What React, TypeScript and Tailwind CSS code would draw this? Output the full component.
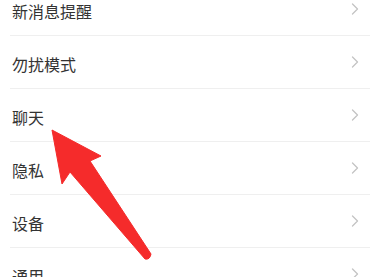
import React from 'react';

const items = ['新消息提醒', '勿扰模式', '聊天', '隐私', '设备', '通用'];

function Chevron() {
    return (
        <svg width="8" height="12" viewBox="0 0 8 12" fill="none" className="shrink-0">
            <path d="M1.5 1 L6.5 6 L1.5 11" stroke="#c4c4c4" strokeWidth="1.3" strokeLinecap="round" strokeLinejoin="round" />
        </svg>
    );
}

export default function App() {
    return (
        <div
            className="relative w-[370px] h-[277px] overflow-hidden bg-white"
            style={{ fontFamily: '"Noto Sans CJK SC", "Noto Sans", sans-serif' }}
        >
            {/* List */}
            <div className="-mt-[17px] flex flex-col">
                {items.map((label) => (
                    <div key={label} className="ml-[10px] h-[53px] flex items-center justify-between border-b border-[#efefef] pr-[11px]">
                        <span className="pl-[2px] pt-[4px] text-[16px] leading-none text-[#333333]">{label}</span>
                        <Chevron />
                    </div>
                ))}
            </div>

            {/* Red annotation arrow */}
            <svg className="absolute left-0 top-0 pointer-events-none" width="370" height="277" viewBox="0 0 370 277">
                <path
                    d="M52 130 L101 156 L90 161 L151 254 Q150 260 145 259 L70 172 L62 184 Z"
                    fill="#f52b2b"
                    stroke="#f52b2b"
                    strokeWidth="1"
                    strokeLinejoin="round"
                />
            </svg>
        </div>
    );
}
